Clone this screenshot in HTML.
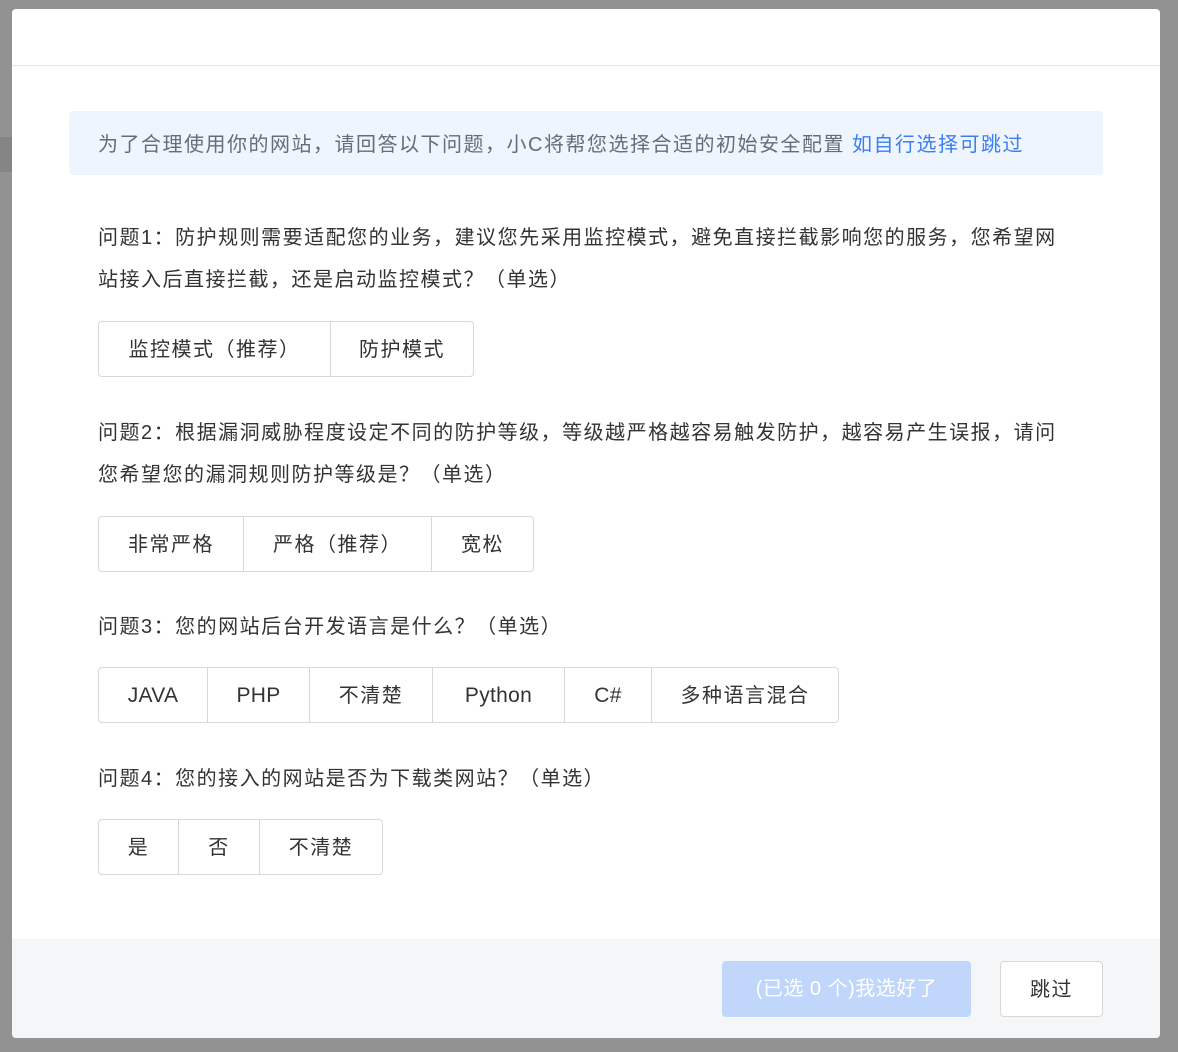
<!DOCTYPE html>
<html><head><meta charset="utf-8"><style>
*{box-sizing:border-box;margin:0;padding:0}
body{width:1178px;height:1052px;background:#929292;position:relative;overflow:hidden;font-family:"Liberation Sans","Noto Sans CJK SC",sans-serif;color:#333}
.band{position:absolute;left:0;top:137px;width:12px;height:35px;background:#858585}
.modal{position:absolute;left:12px;top:9px;width:1148px;height:1029px;background:#fff;border-radius:4px;overflow:hidden}
.hd{height:57px;border-bottom:1px solid #e4e4ee}
.tip{position:absolute;left:57px;top:102px;width:1034px;height:64px;background:#eff5fe;border-radius:4px;font-size:20px;color:#666d7a;line-height:68px;padding-left:29px;letter-spacing:1.5px;white-space:nowrap}
.tip a{color:#3b7ef0}
.q{position:absolute;left:86px;font-size:20px;line-height:42px;color:#333;width:980px;letter-spacing:1.5px}
.g{position:absolute;left:86px;display:flex;height:56px;border:1px solid #d8d8d8;border-radius:4px}
.g div{height:54px;line-height:56px;text-align:center;font-size:20px;color:#333;border-left:1px solid #d8d8d8;letter-spacing:1.5px}
.g div.l{letter-spacing:0.3px;font-size:21px}
.g div:first-child{border-left:none}
.ft{position:absolute;left:0;top:930px;width:1148px;height:99px;background:#f5f6f8}
.ok{position:absolute;left:710px;top:22px;width:249px;height:56px;background:#c1d6fb;border-radius:4px;color:#fff;font-size:20px;text-align:center;line-height:56px;letter-spacing:0.5px}
.sk{position:absolute;left:988px;top:22px;width:103px;height:56px;background:#fff;border:1px solid #d8d8d8;border-radius:4px;font-size:20px;text-align:center;line-height:56px;color:#333;letter-spacing:1.5px}
</style></head><body>
<div class="band"></div>
<div class="modal">
<div class="hd"></div>
<div class="tip">为了合理使用你的网站，请回答以下问题，小C将帮您选择合适的初始安全配置 <a>如自行选择可跳过</a></div>
<div class="q" style="top:208px">问题1：防护规则需要适配您的业务，建议您先采用监控模式，避免直接拦截影响您的服务，您希望网<br>站接入后直接拦截，还是启动监控模式？（单选）</div>
<div class="g" style="top:312px"><div style="width:231px">监控模式（推荐）</div><div style="width:143px">防护模式</div></div>
<div class="q" style="top:403px">问题2：根据漏洞威胁程度设定不同的防护等级，等级越严格越容易触发防护，越容易产生误报，请问<br>您希望您的漏洞规则防护等级是？（单选）</div>
<div class="g" style="top:507px"><div style="width:144px">非常严格</div><div style="width:188px">严格（推荐）</div><div style="width:102px">宽松</div></div>
<div class="q" style="top:597px">问题3：您的网站后台开发语言是什么？（单选）</div>
<div class="g" style="top:658px"><div class="l" style="width:108px">JAVA</div><div class="l" style="width:102px">PHP</div><div style="width:123px">不清楚</div><div class="l" style="width:132px">Python</div><div class="l" style="width:87px">C#</div><div style="width:187px">多种语言混合</div></div>
<div class="q" style="top:749px">问题4：您的接入的网站是否为下载类网站？（单选）</div>
<div class="g" style="top:810px"><div style="width:79px">是</div><div style="width:81px">否</div><div style="width:123px">不清楚</div></div>
<div class="ft"><div class="ok">(已选 0 个)我选好了</div><div class="sk">跳过</div></div>
</div>
</body></html>
